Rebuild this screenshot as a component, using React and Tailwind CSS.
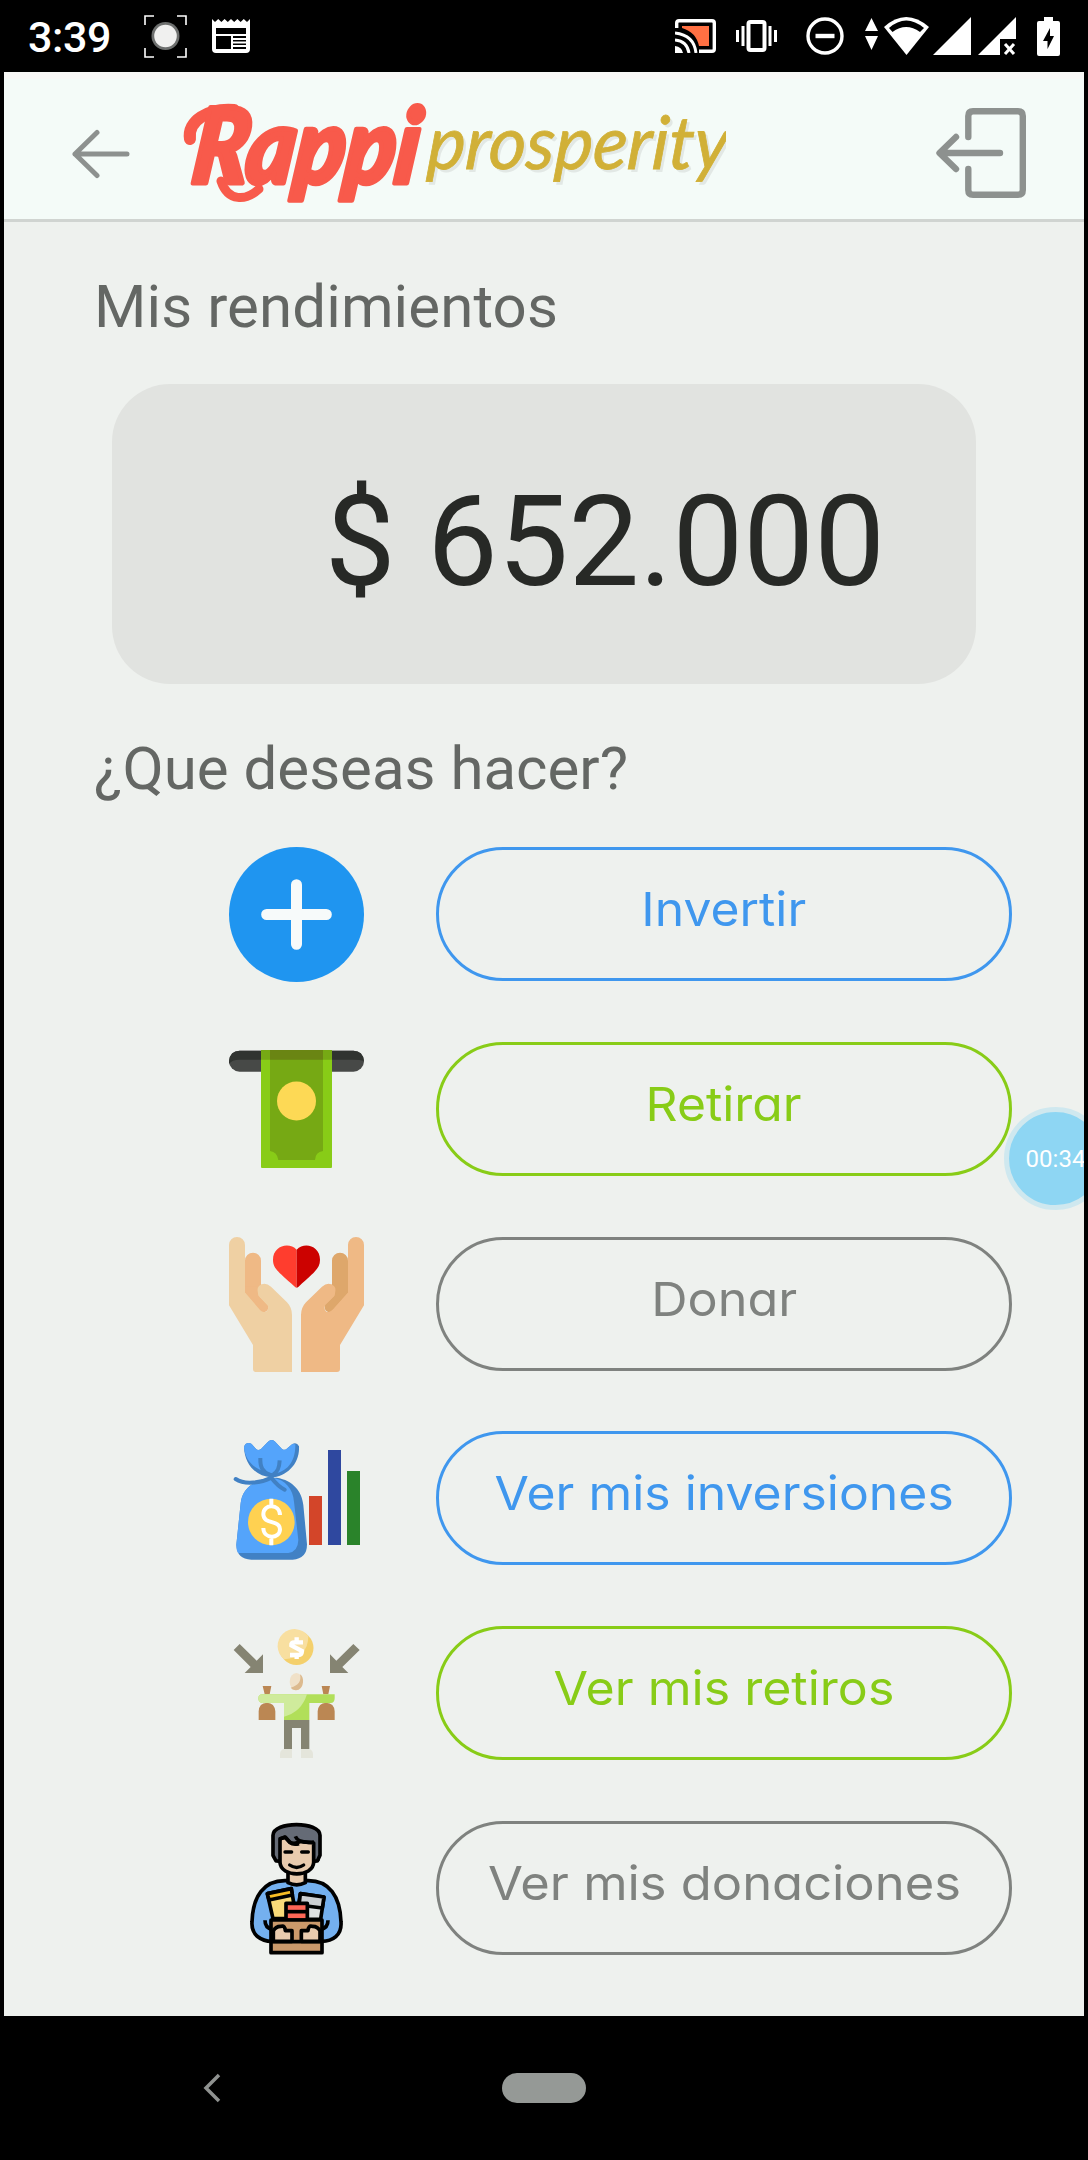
import React from "react";

const BLUE = "text-[#3f97ee] border-[#3f97ee]";
const GREEN = "text-[#88cc17] border-[#88cc17]";
const GRAY = "text-[#7f827f] border-[#7f827f]";

function StatusBar() {
  return (
    <div className="flex h-[72px] shrink-0 items-center justify-between bg-black text-white">
      <div className="flex items-center pl-[28px]">
        <span className="w-[116px] pt-[2px] font-['Roboto',sans-serif] text-[43px] font-medium leading-[70px] tracking-[-0.4px]">3:39</span>
        <svg className="mr-[25px] h-[44px] w-[43px]" viewBox="0 0 43 44" fill="none">
          <path d="M1 11V2H10M33 2H42V11M42 34V43H33M10 43H1V34" stroke="#fff" strokeWidth="1.6" />
          <ellipse cx="21.5" cy="22" rx="14" ry="14" fill="#6d6f6e" />
          <circle cx="21.5" cy="22" r="11.3" fill="#f0f0ef" />
        </svg>
        <svg className="h-[34px] w-[38px]" viewBox="0 0 38 34">
          <path d="M0 0L3 3 6.2 0 9.4 3 12.6 0 15.8 3 19 0 22.2 3 25.4 0 28.6 3 31.8 0 35 3 38 0V30Q38 34 34 34H4Q0 34 0 30Z" fill="#fff" />
          <path d="M4 9H34V15H4ZM4 17H19V30H4ZM21 17H34V19H21ZM21 21H34V22.5H21ZM21 24.5H34V26H21ZM21 28H34V30H21Z" fill="#000" />
        </svg>
      </div>
      <div className="flex items-center pr-[28px]">
        <svg className="mr-[20px] h-[34px] w-[41px]" viewBox="0 0 41 34" fill="none" stroke="#fff">
          <path d="M7 7H34V27H24Q21 13 7 9Z" fill="#ff7043" stroke="none" />
          <path d="M1.7 9V4Q1.7 1.7 4 1.7H37Q39.3 1.7 39.3 4V30Q39.3 32.3 37 32.3H24" strokeWidth="3.4" />
          <path d="M0 14Q19 16 21 34M0 21Q12 22 14 34" strokeWidth="3" />
          <path d="M0 27Q7 28 8 34H0Z" fill="#fff" stroke="none" />
        </svg>
        <svg className="mr-[29px] h-[32px] w-[41px]" viewBox="0 0 41 32" fill="none" stroke="#fff" strokeWidth="3">
          <rect x="12.5" y="2" width="16" height="28" rx="2" strokeWidth="4" />
          <path d="M1.5 10V22M7 6V26M34 6V26M39.5 10V22" />
        </svg>
        <svg className="mr-[21px] h-[38px] w-[38px]" viewBox="0 0 38 38" fill="none" stroke="#fff">
          <circle cx="19" cy="19" r="17" strokeWidth="3.4" />
          <path d="M9.5 19H28.5" strokeWidth="4.4" />
        </svg>
        <svg className="mr-[6px] mb-[4px] h-[32px] w-[13px]" viewBox="0 0 13 32" fill="#fff">
          <path d="M6.5 0L13 13H0ZM0 18H13L6.5 32Z" />
        </svg>
        <svg className="mr-[4px] h-[38px] w-[45px]" viewBox="0 0 45 38">
          <path d="M0 10Q22-10 45 10L22.500 38Z" fill="#fff" />
          <path d="M5 11Q22-4 40 11L36 15Q22 5 8.500 15Z" fill="#000" />
        </svg>
        <svg className="mr-[7px] h-[38px] w-[38px]" viewBox="0 0 38 38" fill="#fff">
          <path d="M38 0V38H0Z" />
        </svg>
        <svg className="mr-[21px] h-[38px] w-[38px]" viewBox="0 0 38 38">
          <path d="M38 0V38H0Z" fill="#fff" />
          <path d="M22 22H38V38H22Z" fill="#000" />
          <path d="M27 27L36 37M36 27L27 37" stroke="#fff" strokeWidth="3" />
        </svg>
        <svg className="h-[39px] w-[23px]" viewBox="0 0 23 39">
          <path d="M7 0H16V4H21Q23 4 23 6V37Q23 39 21 39H2Q0 39 0 37V6Q0 4 2 4H7Z" fill="#fff" />
          <path d="M13 11L6 24H10.500V32L17 19H13Z" fill="#000" />
        </svg>
      </div>
    </div>
  );
}

function Logo() {
  return (
    <svg className="ml-[50px] mt-[12px] h-[130px] w-[546px]" viewBox="180 86 546 130" role="img" aria-label="Rappi prosperity">
      <g fill="none" stroke="#f85a4b" strokeLinecap="round">
        <path d="M190 138C187 120 208 107 234 109" strokeWidth="12" />
        <path d="M221 180C228 201 246 200 259 188" strokeWidth="9" />
      </g>
      <text x="190" y="182" transform="translate(22 0) skewX(-7)" textLength="226" lengthAdjust="spacingAndGlyphs" className="fill-[#f85a4b] stroke-[#f85a4b] font-['Lato',sans-serif] text-[104px] font-black italic [stroke-linejoin:round] [stroke-width:5px]">
        Rappi
      </text>
      <g className="font-['Lato',sans-serif] text-[74px] italic">
        <text x="429" y="171" transform="translate(12 0) skewX(-4)" textLength="301" lengthAdjust="spacingAndGlyphs" className="fill-[#e2e8e5]" aria-hidden="true">
          prosperity
        </text>
        <text x="426" y="168" transform="translate(12 0) skewX(-4)" textLength="301" lengthAdjust="spacingAndGlyphs" className="fill-[#d1b037] stroke-[#d1b037] [stroke-width:0.8px]">
          prosperity
        </text>
      </g>
    </svg>
  );
}

function Header() {
  return (
    <header className="flex h-[150px] shrink-0 items-center border-b-[3px] border-[#d0d4d1] bg-[#f4fbf8] pl-[68px] pr-[57px] shadow-[inset_0_7px_0_#f8f8f6]">
      <svg className="mt-[16px] h-[50px] w-[58px]" viewBox="72 128.500 58 50" fill="none" stroke="#8d918f" strokeWidth="5" strokeLinecap="round" strokeLinejoin="round">
        <path d="M75 153.500H127M97 132L75 153.500 97 175" />
      </svg>
      <Logo />
      <svg className="ml-auto mt-[15px] h-[92px] w-[92px]" viewBox="935 107 92 92" fill="none" stroke="#8d918f" strokeWidth="6.400" strokeLinecap="round" strokeLinejoin="round">
        <path d="M968.300 137V116Q968.300 111.300 973 111.300H1018Q1022.800 111.300 1022.800 116V190Q1022.800 194.800 1018 194.800H973Q968.300 194.800 968.300 190V169" />
        <path d="M1000 153H940M956 137L939.500 153 956 169" />
      </svg>
    </header>
  );
}

const iconSize = "h-[135px] w-[135px] shrink-0";

function PlusIcon() {
  return (
    <svg className={iconSize} viewBox="57 51 405 405">
      <circle cx="259.500" cy="253.500" r="202.500" fill="#1f95f0" />
      <path d="M259.500 164V343M170 253.500H349" stroke="#f7fafa" strokeWidth="33" strokeLinecap="round" />
    </svg>
  );
}

function CashIcon() {
  return (
    <svg className={iconSize} viewBox="57 636 405 405">
      <rect x="57" y="662" width="405" height="63" rx="31.500" fill="#474947" />
      <path d="M57 693Q60 662 89 662H430Q459 662 462 693Q450 689 430 689H89Q65 689 57 702Z" fill="#303330" />
      <rect x="153" y="660" width="213" height="354" rx="3" fill="#88cc17" />
      <path d="M180 660H339V963Q316 966 315 990H205Q202 966 180 963Z" fill="#76a914" />
      <path d="M153 660H366V689H153Z" fill="#76a914" />
      <path d="M180 660H339V689H180Z" fill="#6a8513" />
      <circle cx="259.500" cy="813" r="58.500" fill="#fdd955" />
    </svg>
  );
}

function HandsIcon() {
  return (
    <svg className={iconSize} viewBox="57 81 405 405">
      <path d="M105 152a24 24 0 0 1 48 0V222L176 288 165 306H150L105 260Z" fill="#efb985" />
      <path d="M57 105a24 24 0 0 1 48 0V247L150 300Q158 309 168 305Q178 299 173 287L145 258Q136 240 147 228Q164 214 183 230L231 277Q246 293 246 315V486H138Q129 486 129 477V405L57 286Z" fill="#efd0a3" />
      <path d="M105 230V247L153 299Q163 309 171 302Q179 293 170 284L145 258L141 230Z" fill="#efb985" />
      <path d="M414 152a24 24 0 0 0-48 0V222L343 288 354 306H369L414 260Z" fill="#dea76b" />
      <path d="M462 105a24 24 0 0 0-48 0V247L369 298Q359 309 349 305Q340 297 346 285L374 258Q383 240 372 228Q355 214 336 230L288 277Q273 293 273 315V486H381Q390 486 390 477V405L462 286Z" fill="#efb985" />
      <path d="M414 230V247L366 299Q356 309 348 302Q340 293 349 284L374 258L378 230Z" fill="#dea76b" />
      <path d="M260 119C237 94 189 107 189 149C189 176 207 187 252 228Q256 233 260 233Z" fill="#ff3d2e" />
      <path d="M260 119C283 94 330 107 330 149C330 176 312 187 268 228Q264 233 260 233Z" fill="#cc0200" />
    </svg>
  );
}

function InvestmentIcon() {
  return (
    <svg className={iconSize} viewBox="57 63 405 405">
      <path d="M176 203H200C250 211 276 245 280 285L291 403Q291 447 248 449H124Q80 447 79 404L92 280Q98 220 176 203Z" fill="#4181c4" />
      <path d="M176 203H190C225 210 249 235 252 275L265 390Q264 425 235 429H84Q79 420 79 404L92 280Q98 220 176 203Z" fill="#54a4fb" />
      <path d="M102 112C104 98 117 96 125 102L139 118Q145 122 153 117L174 95Q184 85 194 94L216 117Q225 123 232 115L247 102Q260 95 267 109C270 162 229 200 184 202C140 200 104 166 102 112Z" fill="#4181c4" />
      <path d="M102 112C104 98 117 96 125 102L139 118Q145 122 153 117L174 95Q184 85 194 94L216 117Q225 123 232 115L247 102L256 103C257 160 227 185 195 190C135 184 106 155 102 112Z" fill="#54a4fb" />
      <g fill="none" stroke="#4181c4" strokeWidth="12">
        <path d="M151 144C150 172 158 185 178 194M209 151C208 175 203 185 190 193" />
        <path d="M77 207C105 226 154 218 184 203Q204 229 224 239" strokeLinecap="round" />
      </g>
      <circle cx="184" cy="336" r="70" fill="#ffd151" />
      <path d="M210 315C209 280 160 280 160 313C160 345 210 328 210 358C210 388 160 388 160 354M184 266V290M184 380V406" fill="none" stroke="#fff" strokeWidth="12" />
      <path d="M297 258H336V405H297Z" fill="#d34529" />
      <path d="M354 120H393V405H354Z" fill="#2f489f" />
      <path d="M411 183H450V405H411Z" fill="#2a832a" />
    </svg>
  );
}

function WithdrawalIcon() {
  return (
    <svg className={iconSize} viewBox="57 45 405 405">
      <path d="M89 99L140 149 159 130V186H104L122 168 71 117Z" fill="#858472" />
      <path d="M430 99L379 149 360 130V186H415L397 168 449 117Z" fill="#858472" />
      <circle cx="259.500" cy="111" r="51" fill="#f4d06c" />
      <path d="M222 145A51 51 0 1 1 295 75Q295 140 222 145Z" fill="#f8dfa0" />
      <path d="M279 94H253Q243 94 244 103L276 120Q275 132 266 132H240M260 79V94M260 132V144" fill="none" stroke="#fff" strokeWidth="13" />
      <ellipse cx="259" cy="212" rx="20" ry="26" fill="#f0e1c8" />
      <path d="M270 190Q280 196 279 214Q276 237 257 238Q246 237 242 230Q277 221 270 190Z" fill="#dcba8e" />
      <path d="M158 225H184L179 250H164ZM335 225H360L355 250H340Z" fill="#bb8753" />
      <path d="M146 327V301Q147 276 171 275Q194 276 196 301V327ZM323 327V301Q325 276 348 275Q373 276 374 301V327Z" fill="#bb8753" />
      <path d="M157 250H374V262Q374 276 362 276H298V327H222V276H157Q145 275 145 262Q145 250 157 250Z" fill="#b1df59" />
      <path d="M157 250H291Q274 304 222 317V276H157Q145 275 145 262Q145 250 157 250Z" fill="#cfeb9c" />
      <path d="M222 327H298V414H273V351H246V414H222Z" fill="#858472" />
      <path d="M210 441V430Q210 416 223 414H246V441ZM309 441V430Q309 416 296 414H273V441Z" fill="#e4e5db" />
    </svg>
  );
}

function DonorIcon() {
  return (
    <svg className={iconSize} viewBox="27 62 405 405" stroke="#000" strokeWidth="11" strokeLinejoin="round">
      <path d="M200 241C130 238 98 290 96 365C93 405 125 424 158 423H302C339 424 366 404 363 365C361 290 329 238 259 241Z" fill="#74b0ef" />
      <path d="M204 215V247Q230 260 256 247V215" fill="#e9cbae" />
      <path d="M177 150H168V178L180 185ZM283 150H294V178L280 185Z" fill="#e9cbae" />
      <path d="M159 165V105C160 62 299 62 300 105V165L292 182H168Z" fill="#656b76" />
      <path d="M180 115L196 111 210 126Q224 133 241 123L281 128V186C280 232 181 232 180 186Z" fill="#e9cbae" />
      <path d="M180 116L195 110 209 126Q220 135 237 130M226 108Q235 130 282 125" fill="none" />
      <path d="M195 155H215M245 155H265M209 194Q230 209 251 194" fill="none" strokeLinecap="round" strokeWidth="10" />
      <path d="M142 280L214 265 229 355H159Z" fill="#f9da79" />
      <path d="M142 280L214 265 217 284 147 299Z" fill="#f8bd24" />
      <path d="M241 280L312 290 302 357H229Z" fill="#e0e2e3" />
      <path d="M241 280L312 290 307 323 237 314Z" fill="#cccfd2" />
      <path d="M198 309H262V359H198Z" fill="#ff6656" />
      <path d="M198 334H262" />
      <path d="M153 359H306V457H153Z" fill="#cb996b" />
      <path d="M153 424H306M135 360Q135 383 156 387M324 360Q324 383 303 387" fill="none" />
      <path d="M160 392Q167 377 184 378Q195 375 196 391H216V423H160ZM300 392Q293 377 276 378Q265 375 264 391H244V423H300Z" fill="#e9cbae" />
    </svg>
  );
}

const actions = [
  { label: "Invertir", tone: BLUE, Icon: PlusIcon, stretch: "scale-x-[1.06]" },
  { label: "Retirar", tone: GREEN, Icon: CashIcon, stretch: "scale-x-[1.06]" },
  { label: "Donar", tone: GRAY, Icon: HandsIcon, stretch: "scale-x-[1.07]" },
  { label: "Ver mis inversiones", tone: BLUE, Icon: InvestmentIcon, stretch: "scale-x-[1.062]" },
  { label: "Ver mis retiros", tone: GREEN, Icon: WithdrawalIcon, stretch: "scale-x-[1.065]" },
  { label: "Ver mis donaciones", tone: GRAY, Icon: DonorIcon, stretch: "scale-x-[1.078]" },
];

function ActionRow({ label, tone, Icon, stretch }) {
  return (
    <li className="flex h-[134px] items-start gap-[72px]">
      <Icon />
      <button className={`h-[134px] w-[576px] rounded-full border-[3px] pb-[11px] font-['Inter',sans-serif] text-[47px] leading-none whitespace-nowrap [font-feature-settings:'cv11'] ${tone}`}>
        <span className={`inline-block ${stretch}`}>{label}</span>
      </button>
    </li>
  );
}

export default function App() {
  return (
    <div className="flex h-[2160px] w-[1088px] flex-col overflow-hidden bg-black">
      <StatusBar />
      <div className="relative mx-[4px] flex h-[1944px] flex-col overflow-hidden bg-[#eef1ee]">
        <Header />
        <main className="flex flex-col pt-[50px] font-['Roboto',sans-serif]">
          <h1 className="ml-[90px] text-[60px] leading-[70px] tracking-[0.1px] text-[#646764]">Mis rendimientos</h1>
          <div className="mx-[108px] mt-[42px] flex h-[300px] items-center justify-end rounded-[58px] bg-[#e1e3e0] pr-[91px] pt-[15px] text-[126px] leading-none text-[#272926]">
            $ 652.000
          </div>
          <h2 className="ml-[90px] mt-[50px] text-[60px] leading-[70px] text-[#646764]">¿Que deseas hacer?</h2>
          <ul className="ml-[225px] mt-[43px] flex flex-col gap-[60.8px]">
            {actions.map((action) => (
              <ActionRow key={action.label} {...action} />
            ))}
          </ul>
        </main>
        <div className="absolute left-[1000px] top-[1035px] flex h-[103px] w-[103px] items-center justify-center rounded-full border-[5px] border-[#cfe8ef] bg-[#8ed6f3] font-['Roboto',sans-serif] text-[24px] text-white">
          00:34
        </div>
      </div>
      <nav className="flex h-[144px] items-center pl-[203px]">
        <svg className="h-[30px] w-[18px]" viewBox="0 0 18 30" fill="none" stroke="#8f9290" strokeWidth="3.500">
          <path d="M16 2L3 15 16 28" />
        </svg>
        <div className="ml-[281px] h-[30px] w-[84px] rounded-full bg-[#959996]" />
      </nav>
    </div>
  );
}
